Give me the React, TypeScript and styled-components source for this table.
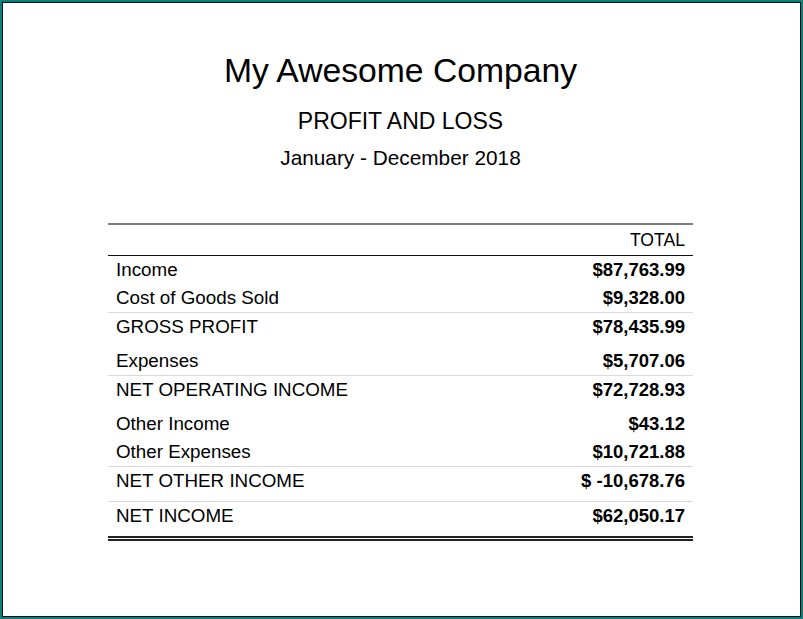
import React from "react";
import styled, { createGlobalStyle } from "styled-components";

const Global = createGlobalStyle`
  html, body { margin: 0; padding: 0; background: #ffffff; }
  body { font-family: "Liberation Sans", Arial, Helvetica, sans-serif; color: #000; }
  * { box-sizing: border-box; }
`;

const Frame = styled.div`
  width: 803px;
  height: 619px;
  border: 2px solid #0b7f7b;
`;

const Sheet = styled.div`
  height: 100%;
  border: 1px solid #111;
  background: #fff;
  display: flex;
  flex-direction: column;
  align-items: center;
  padding: 47px 2px 0 0;
`;

const Company = styled.h1`
  margin: 0;
  font-size: 33.7px;
  font-weight: 400;
  line-height: 40px;
`;

const ReportTitle = styled.h2`
  margin: 17px 0 0;
  font-size: 23px;
  font-weight: 400;
  line-height: 28px;
`;

const Period = styled.div`
  margin-top: 10px;
  font-size: 20.8px;
  line-height: 26px;
`;

const Report = styled.div`
  margin-top: 52px;
  width: 585px;
  font-size: 18.8px;
`;

const HeaderRow = styled.div`
  border-top: 2px solid #7c7c7c;
  border-bottom: 1px solid #111;
  height: 33px;
  display: flex;
  justify-content: flex-end;
  align-items: center;
  padding: 0 8px 0 8px;
  font-size: 17.6px;
`;

const Row = styled.div<{ $total?: boolean; $final?: boolean }>`
  display: flex;
  justify-content: space-between;
  align-items: flex-start;
  padding: 0 8px ${(p) => (p.$total ? "6px" : "0")};
  line-height: 28px;
  border-top: ${(p) => (p.$total ? "1px solid #d9d9d9" : "none")};
  border-bottom: ${(p) => (p.$final ? "5px double #222" : "none")};
`;

const Label = styled.span``;

const Amount = styled.span`
  font-weight: 700;
  font-size: 18.5px;
`;

type Line = { label: string; amount: string; total?: boolean; final?: boolean };

const lines: Line[] = [
  { label: "Income", amount: "$87,763.99" },
  { label: "Cost of Goods Sold", amount: "$9,328.00" },
  { label: "GROSS PROFIT", amount: "$78,435.99", total: true },
  { label: "Expenses", amount: "$5,707.06" },
  { label: "NET OPERATING INCOME", amount: "$72,728.93", total: true },
  { label: "Other Income", amount: "$43.12" },
  { label: "Other Expenses", amount: "$10,721.88" },
  { label: "NET OTHER INCOME", amount: "$ -10,678.76", total: true },
  { label: "NET INCOME", amount: "$62,050.17", total: true, final: true },
];

export default function App() {
  return (
    <>
      <Global />
      <Frame>
        <Sheet>
          <Company>My Awesome Company</Company>
          <ReportTitle>PROFIT AND LOSS</ReportTitle>
          <Period>January - December 2018</Period>
          <Report>
            <HeaderRow>TOTAL</HeaderRow>
            {lines.map((l) => (
              <Row key={l.label} $total={l.total} $final={l.final}>
                <Label>{l.label}</Label>
                <Amount>{l.amount}</Amount>
              </Row>
            ))}
          </Report>
        </Sheet>
      </Frame>
    </>
  );
}
